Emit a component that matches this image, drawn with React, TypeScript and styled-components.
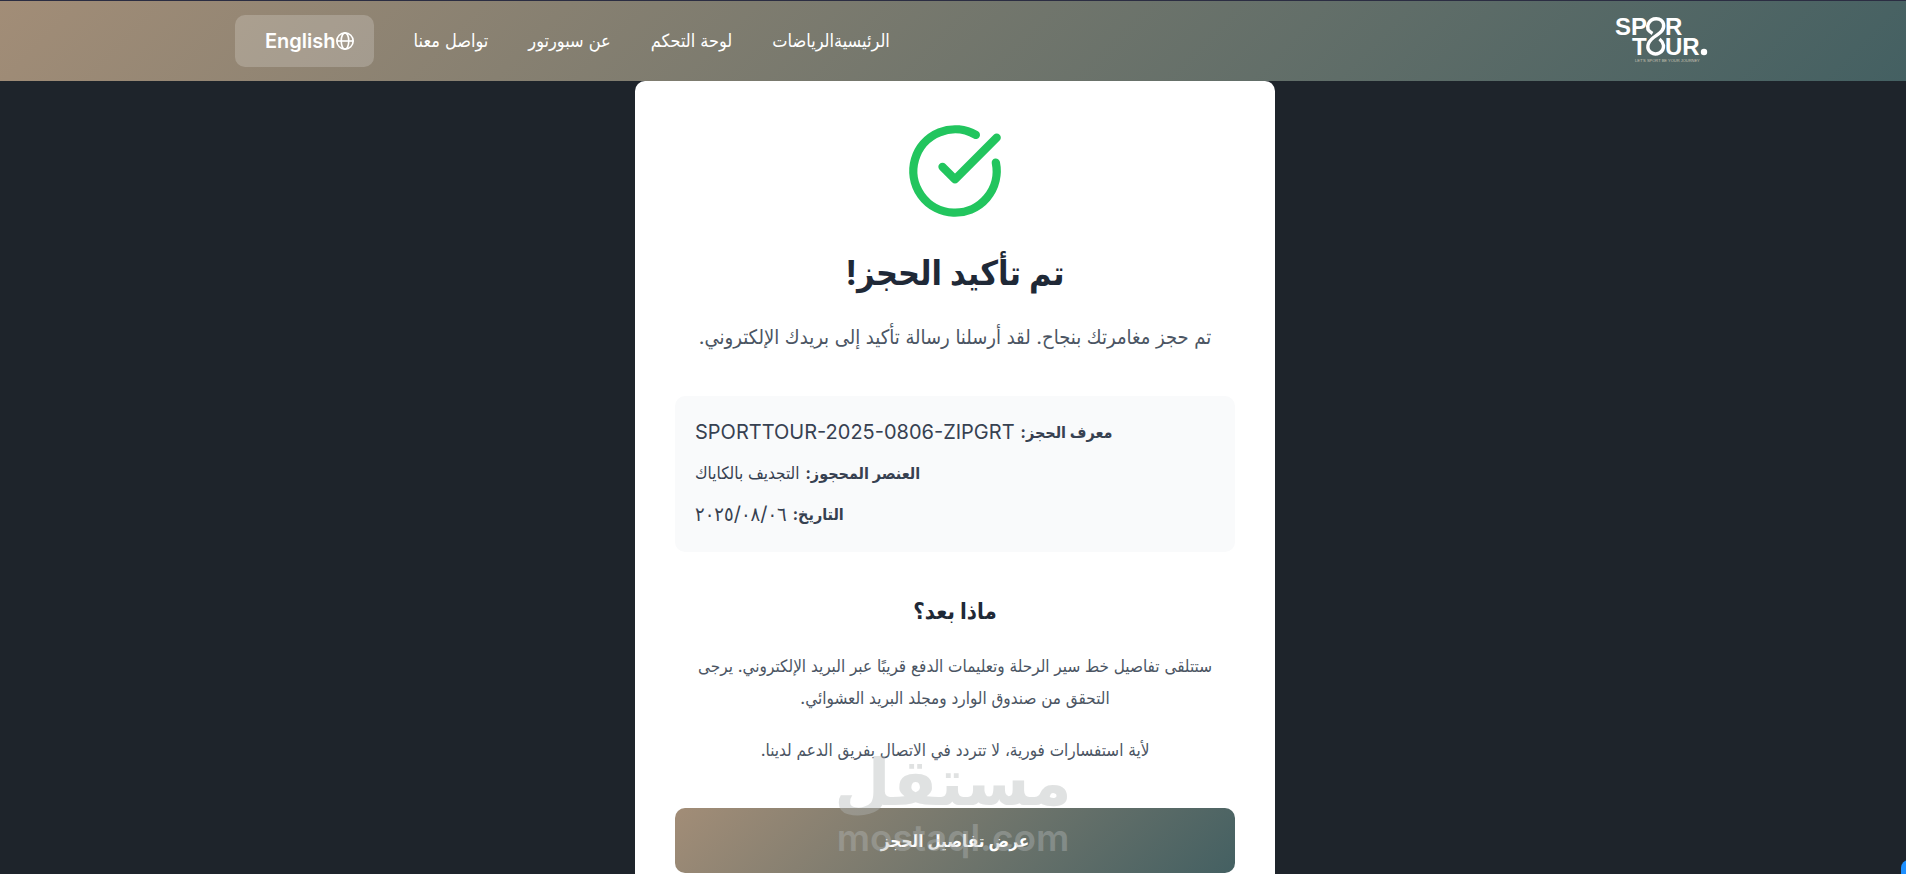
import React from "react";
import styled, { createGlobalStyle } from "styled-components";

const GlobalStyle = createGlobalStyle`
  *, *::before, *::after { box-sizing: border-box; }
  body {
    margin: 0;
    background: #1e242b;
    font-family: Inter, "DejaVu Sans Condensed", sans-serif;
  }
  h1, h2, p, dl, dd { margin: 0; }
`;

const brandGradient = "linear-gradient(135deg, #a28d77 0%, #446062 100%)";

const Page = styled.div`
  position: relative;
  height: 100vh;
  overflow: hidden;
`;

const Header = styled.header`
  border-top: 1px solid #2b2d42;
  background: ${brandGradient} border-box;
`;

const HeaderInner = styled.div`
  display: flex;
  align-items: center;
  justify-content: space-between;
  max-width: 1540px;
  height: 80px;
  margin: 0 auto;
  padding: 0 14px 0 52px;
`;

const LogoLink = styled.a`
  display: block;
  line-height: 0;
`;

const Nav = styled.nav`
  display: flex;
  align-items: center;
  gap: 40px;
`;

const NavGroup = styled.div`
  display: flex;
`;

const NavLink = styled.a`
  color: #fff;
  font-size: 18px;
  line-height: 24px;
  text-decoration: none;
  white-space: nowrap;
`;

const LanguageButton = styled.button`
  display: flex;
  align-items: center;
  height: 52px;
  padding: 0 20px 0 30px;
  border: 0;
  border-radius: 10px;
  background: rgba(255, 255, 255, 0.2);
  color: #fff;
  font: 600 20px/24px Inter, sans-serif;
  cursor: pointer;
`;

const Content = styled.div`
  padding-left: 4px;
`;

const Card = styled.main`
  display: flex;
  flex-direction: column;
  align-items: center;
  max-width: 640px;
  margin: 0 auto;
  padding: 40px;
  border-radius: 10px;
  background: #fff;
  color: #4b5563;
  text-align: center;
`;

const Title = styled.h1`
  margin-top: 20px;
  color: #1f2937;
  font-size: 34px;
  font-weight: 700;
  line-height: 64px;
`;

const Lead = styled.p`
  margin-top: 16px;
  font-size: 20px;
  line-height: 32px;
`;

const Details = styled.dl`
  display: flex;
  flex-direction: column;
  gap: 9px;
  width: 100%;
  margin-top: 43px;
  padding: 20px 20px 22px;
  border-radius: 10px;
  background: #f9fafb;
  color: #374151;
  font-size: 17px;
  line-height: 32px;
`;

const DetailRow = styled.div`
  display: flex;
  justify-content: flex-end;
  gap: 6px;
`;

const Term = styled.dt`
  font-size: 16px;
  font-weight: 700;
`;

const Value = styled.dd<{ $code?: boolean }>`
  font-size: ${(p) => (p.$code ? "20px" : "17px")};
`;

const Subtitle = styled.h2`
  margin-top: 40px;
  color: #1f2937;
  font-size: 22px;
  font-weight: 700;
  line-height: 38px;
`;

const Text = styled.p`
  margin-top: 20px;
  font-size: 17px;
  line-height: 32px;
`;

const PrimaryButton = styled.button`
  width: 100%;
  height: 65px;
  margin-top: 42px;
  flex-shrink: 0;
  border: 0;
  border-radius: 10px;
  background: ${brandGradient};
  color: #fff;
  font: 700 17px/24px Inter, "DejaVu Sans Condensed", sans-serif;
  cursor: pointer;
`;

const Watermark = styled.div`
  position: absolute;
  left: 50%;
  bottom: 16px;
  display: flex;
  flex-direction: column;
  align-items: center;
  transform: translateX(-50%);
  color: #b4b8b8;
  opacity: 0.4;
  pointer-events: none;
`;

const WatermarkName = styled.span`
  font: 700 65px/70px "DejaVu Sans", sans-serif;
`;

const WatermarkDomain = styled.span`
  font: 600 37px/40px Inter, sans-serif;
`;

const ChatButton = styled.button`
  position: absolute;
  right: -51px;
  bottom: -42px;
  width: 56px;
  height: 56px;
  border: 0;
  border-radius: 8px;
  background: #1e90ff;
`;

const Logo = () => (
  <svg width="94" height="64" viewBox="0 -8 94 64" role="img" aria-label="Sportour" direction="ltr">
    <g fill="#fff" fontFamily="Liberation Sans, sans-serif" fontWeight="700" fontSize="24">
      <text x="0" y="18">SP</text>
      <text x="50" y="18">R</text>
      <text x="17" y="38">T</text>
      <text x="50" y="38">UR</text>
    </g>
    <path
      d="M37.500 16.500C33 14 31.500 10.500 33.500 6.500C36.500 0 46.500 0 48.500 7C50 14 43 17 38.500 20.500C32 25.500 31 32 36 35.500C41 39 49 35.500 48.500 28.500C48 26 47 24 44.500 22"
      fill="none" stroke="#fff" strokeWidth="3.400"
    />
    <circle cx="89" cy="35" r="3.200" fill="#fff" />
    <text x="20" y="45" fill="#c9c2b4" fontFamily="Liberation Sans, sans-serif" fontSize="4">LET'S SPORT BE YOUR JOURNEY</text>
  </svg>
);

const Globe = () => (
  <svg width="18" height="18" viewBox="1 1 22 22" fill="none" stroke="#fff" strokeWidth="2" aria-hidden="true">
    <circle cx="12" cy="12" r="10" />
    <ellipse cx="12" cy="12" rx="4.600" ry="10" />
    <path d="M2 12h20" />
  </svg>
);

const CheckCircle = () => (
  <svg
    width="100" height="100" viewBox="0 0 24 24" fill="none" stroke="#22c55e"
    strokeWidth="2" strokeLinecap="round" strokeLinejoin="round" aria-hidden="true"
  >
    <path d="M21.801 10A10 10 0 1 1 17 3.335" />
    <path d="m9 11 3 3L22 4" />
  </svg>
);

export default function App() {
  return (
    <Page dir="rtl" lang="ar">
      <GlobalStyle />
      <Header>
        <HeaderInner>
          <LogoLink href="#"><Logo /></LogoLink>
          <Nav>
            <NavGroup>
              <NavLink href="#">الرئيسية</NavLink>
              <NavLink href="#">الرياضات</NavLink>
            </NavGroup>
            <NavLink href="#">لوحة التحكم</NavLink>
            <NavLink href="#">عن سبورتور</NavLink>
            <NavLink href="#">تواصل معنا</NavLink>
            <LanguageButton type="button"><Globe />English</LanguageButton>
          </Nav>
        </HeaderInner>
      </Header>
      <Content>
        <Card>
          <CheckCircle />
          <Title>تم تأكيد الحجز!</Title>
          <Lead>تم حجز مغامرتك بنجاح. لقد أرسلنا رسالة تأكيد إلى بريدك الإلكتروني.</Lead>
          <Details>
            <DetailRow>
              <Term>معرف الحجز:</Term>
              <Value $code>SPORTTOUR-2025-0806-ZIPGRT</Value>
            </DetailRow>
            <DetailRow>
              <Term>العنصر المحجوز:</Term>
              <Value>التجديف بالكاياك</Value>
            </DetailRow>
            <DetailRow>
              <Term>التاريخ:</Term>
              <Value $code dir="ltr">٢٠٢٥/٠٨/٠٦</Value>
            </DetailRow>
          </Details>
          <Subtitle>ماذا بعد؟</Subtitle>
          <Text>
            ستتلقى تفاصيل خط سير الرحلة وتعليمات الدفع قريبًا عبر البريد الإلكتروني. يرجى التحقق من صندوق الوارد ومجلد البريد العشوائي.
          </Text>
          <Text>لأية استفسارات فورية، لا تتردد في الاتصال بفريق الدعم لدينا.</Text>
          <PrimaryButton type="button">عرض تفاصيل الحجز</PrimaryButton>
        </Card>
      </Content>
      <Watermark aria-hidden="true">
        <WatermarkName>مستقل</WatermarkName>
        <WatermarkDomain dir="ltr">mostaql.com</WatermarkDomain>
      </Watermark>
      <ChatButton type="button" aria-label="محادثة" />
    </Page>
  );
}
